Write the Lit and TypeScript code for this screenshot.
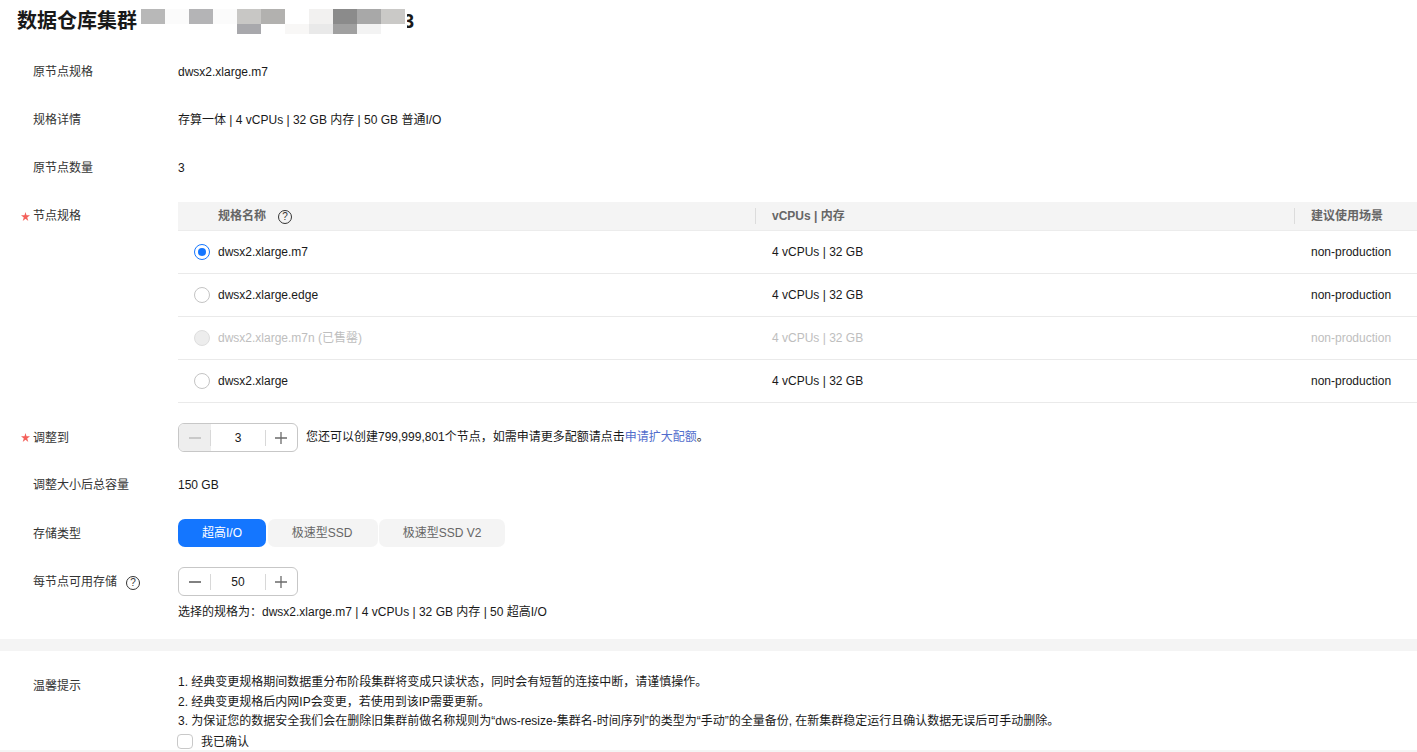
import { LitElement, html, css } from "lit";
import { customElement } from "lit/decorators.js";

const row1 = ["#b8b8b8", "#fbfbfb", "#b4b4b6", "#fbfbfb", "#c8c7c5", "#b2b1af", "#ffffff", "#f2f1f0", "#8b8b8b", "#a8a8a8", "#cac9c7"];
const row2 = ["#ffffff", "#ffffff", "#ffffff", "#ffffff", "#a8a8ac", "#ffffff", "#f8f7f6", "#e9e9e9", "#a0a0a0", "#f3f3f3", "#ffffff"];

const specs = [
  { name: "dwsx2.xlarge.m7", state: "on" },
  { name: "dwsx2.xlarge.edge", state: "" },
  { name: "dwsx2.xlarge.m7n (已售罄)", state: "disabled" },
  { name: "dwsx2.xlarge", state: "" },
];

@customElement("app-root")
export class AppRoot extends LitElement {
  static styles = css`
    :host {
      display: block;
      width: 1417px;
      height: 752px;
      overflow: hidden;
      background: #fff;
      color: #191919;
      font: 12px/24px "Liberation Sans", "Noto Sans CJK SC", sans-serif;
    }
    .title {
      display: flex;
      align-items: flex-start;
      height: 47px;
      padding: 9px 0 0 17px;
      box-sizing: border-box;
      margin-bottom: 13px;
      font-size: 20px;
      font-weight: 700;
      line-height: 25px;
      color: #191919;
    }
    .title-text { width: 120px; white-space: nowrap; }
    .mosaic {
      position: relative;
      z-index: 1;
      margin-left: 4px;
      display: grid;
      grid-template-columns: repeat(11, 24px);
      grid-template-rows: 15px 10px;
      width: 264px;
      padding-right: 2px;
      background: #fff;
    }
    .tail { margin-left: -4px; }
    .row { display: flex; padding-left: 33px; }
    .label { width: 145px; flex: none; display: flex; align-items: center; height: 24px; color: #333; }
    .star { width: 13px; margin-left: -13px; flex: none; display: flex; align-items: center; padding-top: 1px; box-sizing: border-box; }
    .sized .star { padding-top: 0; }
    .star svg { display: block; margin-left: 1px; }
    .value { flex: 1; min-width: 0; display: flex; align-items: center; min-height: 24px; }
    .gap-48 { margin-bottom: 24px; }
    .gap-22 { margin-bottom: 22px; }
    .help {
      width: 12px; height: 12px; border: 1px solid #333; border-radius: 50%;
      display: inline-flex; align-items: center; justify-content: center;
      font-size: 10px; line-height: 12px; color: #333; flex: none;
    }
    .help.l { margin-left: 9px; margin-top: 2px; }
    .help.h { margin-left: 12px; margin-top: 2px; font-weight: 400; }

    /* table */
    .table-row { align-items: flex-start; margin-bottom: 20px; }
    .table-row .label { margin-top: 2px; }
    .table { flex: 1; min-width: 0; }
    .tr { display: grid; grid-template-columns: 578px 539px 122px; height: 43px; align-items: center; border-bottom: 1px solid #eaeaea; box-sizing: border-box; }
    .tr.head { height: 29px; background: #f4f4f4; border-bottom: 1px solid #ececec; color: #666; font-weight: 700; }
    .cell { display: flex; align-items: center; height: 100%; padding-left: 16px; white-space: nowrap; box-sizing: border-box; }
    .head .cell + .cell { position: relative; }
    .head .cell + .cell::before { content: ""; position: absolute; left: -1px; top: 6px; height: 16px; width: 1px; background: #dcdcdc; }
    .radio { width: 16px; height: 16px; box-sizing: border-box; border: 1px solid #c4c4c4; border-radius: 50%; background: #fff; margin-right: 8px; display: flex; align-items: center; justify-content: center; flex: none; }
    .on .radio { border-color: #1476ff; }
    .on .radio::after { content: ""; width: 8px; height: 8px; border-radius: 50%; background: #1476ff; }
    .disabled .radio { background: #ededed; border-color: #dedede; }
    .disabled { color: #bebebe; }
    .spec-head { padding-left: 40px; }

    /* stepper */
    .stepper { width: 120px; height: 29px; box-sizing: border-box; border: 1px solid #c7c7c7; border-radius: 6px; display: flex; align-items: center; overflow: hidden; flex: none; }
    .step { height: 100%; flex: none; display: flex; align-items: center; justify-content: center; box-sizing: border-box; }
    .step.minus { width: 32px; }
    .step.plus { width: 31px; padding-right: 2px; }
    .step.off { background: #eeeeee; }
    .num { flex: 1; height: 16px; margin-left: -1px; position: relative; display: flex; align-items: center; justify-content: center; border-left: 1px solid #d8d8d8; border-right: 1px solid #d8d8d8; color: #191919; }
    .hint { margin-left: 8px; margin-bottom: 2px; white-space: nowrap; }
    .hint a { color: #526ecc; text-decoration: none; }
    .sized { height: 29px; align-items: center; }
    .sized .label { height: 29px; }
    .after-stepper { margin-bottom: 21px; }
    .after-total { margin-bottom: 22px; }

    /* pills */
    .pills { display: flex; gap: 2px; }
    .pill { height: 28px; display: flex; align-items: center; justify-content: center; border-radius: 7px; background: #f4f4f4; color: #666; box-sizing: border-box; }
    .pill.on { background: #1476ff; color: #fff; width: 88px; }
    .pill.a { width: 110px; padding-right: 2px; }
    .pill.b { width: 126px; margin-left: -1px; }
    .pills-row { margin-bottom: 19px; }
    .pills-row .label { height: 28px; margin-top: 1px; }

    .summary { padding-left: 178px; margin-top: 4px; height: 24px; margin-bottom: 15px; white-space: nowrap; }
    .band { height: 12px; background: #f4f4f4; }

    .notes { display: flex; padding: 22px 0 0 33px; }
    .notes .label { margin-top: 1px; }
    .lines { line-height: 19.5px; white-space: nowrap; }
    .check { display: flex; align-items: center; height: 17px; margin-top: 1.5px; margin-left: -1px; }
    .check-text { margin-top: 2px; }
    .box { width: 16px; height: 15px; border: 1px solid #c9c9c9; border-radius: 4px; box-sizing: border-box; margin-right: 8px; background: #fff; flex: none; }
    .foot { height: 2px; background: #f4f4f4; }
  `;

  private star() {
    return html`<span class="star"><svg width="9" height="9" viewBox="0 0 10 10"><path d="M5 0 6.1 3.6 10 3.7 6.9 6 8.1 10 5 7.6 1.9 10 3.1 6 0 3.7 3.9 3.6Z" fill="#f4605a"/></svg></span>`;
  }

  private stepper(val: string, off: boolean) {
    const c = off ? "#bdbdbd" : "#575757";
    return html`<div class="stepper">
      <div class="step minus ${off ? "off" : ""}"><svg width="12" height="12" viewBox="0 0 12 12"><path d="M0 6h12" stroke="${c}" stroke-width="1.3"/></svg></div>
      <div class="num">${val}</div>
      <div class="step plus"><svg width="12" height="12" viewBox="0 0 12 12"><path d="M0 6h12M6 0v12" stroke="#6b6b6b" stroke-width="1.3"/></svg></div>
    </div>`;
  }

  render() {
    return html`
      <div class="title">
        <span class="title-text">数据仓库集群</span>
        <div class="mosaic">
          ${row1.map((c) => html`<i style="background:${c}"></i>`)}
          ${row2.map((c) => html`<i style="background:${c}"></i>`)}
        </div>
        <span class="tail">3</span>
      </div>

      <div class="row gap-48"><div class="label">原节点规格</div><div class="value">dwsx2.xlarge.m7</div></div>
      <div class="row gap-48"><div class="label">规格详情</div><div class="value">存算一体 | 4 vCPUs | 32 GB 内存 | 50 GB 普通I/O</div></div>
      <div class="row gap-22"><div class="label">原节点数量</div><div class="value">3</div></div>

      <div class="row table-row">
        <div class="label">${this.star()}节点规格</div>
        <div class="table">
          <div class="tr head">
            <div class="cell spec-head">规格名称<span class="help h">?</span></div>
            <div class="cell">vCPUs | 内存</div>
            <div class="cell">建议使用场景</div>
          </div>
          ${specs.map(
            (s) => html`<div class="tr ${s.state}">
              <div class="cell"><span class="radio"></span>${s.name}</div>
              <div class="cell">4 vCPUs | 32 GB</div>
              <div class="cell">non-production</div>
            </div>`
          )}
        </div>
      </div>

      <div class="row sized after-stepper">
        <div class="label">${this.star()}调整到</div>
        <div class="value">${this.stepper("3", true)}
          <span class="hint">您还可以创建799,999,801个节点，如需申请更多配额请点击<a href="#">申请扩大配额</a>。</span>
        </div>
      </div>

      <div class="row after-total"><div class="label">调整大小后总容量</div><div class="value">150 GB</div></div>

      <div class="row pills-row">
        <div class="label">存储类型</div>
        <div class="pills">
          <div class="pill on">超高I/O</div>
          <div class="pill a">极速型SSD</div>
          <div class="pill b">极速型SSD V2</div>
        </div>
      </div>

      <div class="row sized">
        <div class="label">每节点可用存储<span class="help l">?</span></div>
        <div class="value">${this.stepper("50", false)}</div>
      </div>
      <div class="summary">选择的规格为：dwsx2.xlarge.m7 | 4 vCPUs | 32 GB 内存 | 50 超高I/O</div>

      <div class="band"></div>

      <div class="notes">
        <div class="label">温馨提示</div>
        <div class="lines">
          <div>1. 经典变更规格期间数据重分布阶段集群将变成只读状态，同时会有短暂的连接中断，请谨慎操作。</div>
          <div>2. 经典变更规格后内网IP会变更，若使用到该IP需要更新。</div>
          <div>3. 为保证您的数据安全我们会在删除旧集群前做名称规则为“dws-resize-集群名-时间序列”的类型为“手动”的全量备份, 在新集群稳定运行且确认数据无误后可手动删除。</div>
          <div class="check"><span class="box"></span><span class="check-text">我已确认</span></div>
        </div>
      </div>
      <div class="foot"></div>
    `;
  }
}
